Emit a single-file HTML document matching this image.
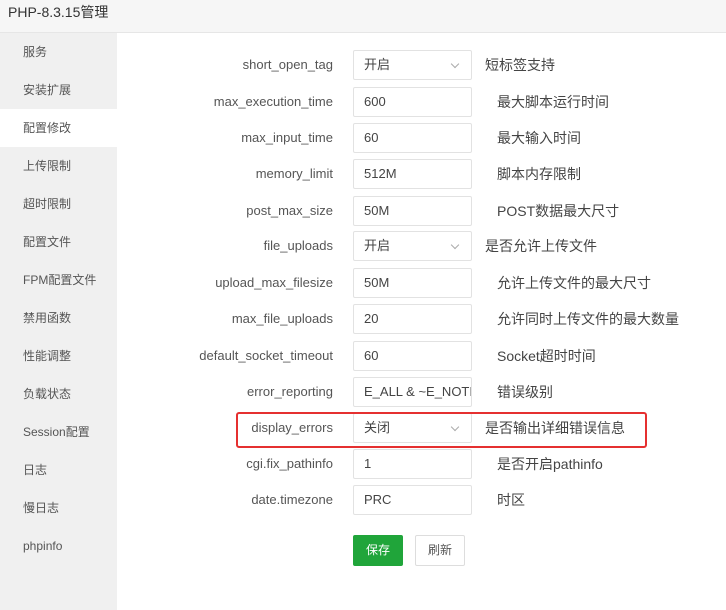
<!DOCTYPE html>
<html><head><meta charset="utf-8"><style>
*{box-sizing:border-box;margin:0;padding:0}
body{width:726px;height:610px;overflow:hidden;background:#fff;font-family:"Liberation Sans","Noto Sans CJK SC",sans-serif;color:#333;position:relative}
.hd{position:absolute;left:0;top:0;width:726px;height:33px;background:#f6f6f6;border-bottom:1px solid #e6e6e6;font-size:14px;line-height:24px;padding-left:8px;color:#333}
.sb{position:absolute;left:0;top:33px;width:117px;height:577px;background:#f0f0f0}
.sb div{height:38px;line-height:38px;padding-left:23px;font-size:12px;color:#555}
.sb .on{background:#fff}
.row{position:absolute;left:0;height:30px;width:726px;font-size:13px}
.lb{position:absolute;right:393px;top:0;line-height:30px;color:#555;white-space:nowrap}
.in{position:absolute;left:353px;top:0;width:119px;height:30px;border:1px solid #e2e2e2;border-radius:2px;line-height:28px;padding:0 8px 0 10px;font-size:13px;color:#444;overflow:hidden;white-space:nowrap}
.in.sel:after{content:"";position:absolute;right:13px;top:10px;width:5px;height:5px;border-right:1px solid #aaa;border-bottom:1px solid #aaa;transform:rotate(45deg)}
.ds{position:absolute;top:0;line-height:30px;color:#444;white-space:nowrap;font-size:14px}
.red{position:absolute;left:236px;top:412px;width:411px;height:36px;border:2px solid #e53030;border-radius:3px}
.btn{position:absolute;top:535px;height:31px;line-height:29px;font-size:12px;text-align:center;border-radius:2px}
</style></head><body>
<div class="hd">PHP-8.3.15管理</div>
<div class="sb">
<div>服务</div><div>安装扩展</div><div class="on">配置修改</div><div>上传限制</div><div>超时限制</div><div>配置文件</div><div>FPM配置文件</div><div>禁用函数</div><div>性能调整</div><div>负载状态</div><div>Session配置</div><div>日志</div><div>慢日志</div><div>phpinfo</div>
</div>

<div class="row" style="top:50px"><span class="lb">short_open_tag</span><div class="in sel">开启</div><span class="ds" style="left:485px">短标签支持</span></div>
<div class="row" style="top:87px"><span class="lb">max_execution_time</span><div class="in">600</div><span class="ds" style="left:497px">最大脚本运行时间</span></div>
<div class="row" style="top:123px"><span class="lb">max_input_time</span><div class="in">60</div><span class="ds" style="left:497px">最大输入时间</span></div>
<div class="row" style="top:159px"><span class="lb">memory_limit</span><div class="in">512M</div><span class="ds" style="left:497px">脚本内存限制</span></div>
<div class="row" style="top:196px"><span class="lb">post_max_size</span><div class="in">50M</div><span class="ds" style="left:497px">POST数据最大尺寸</span></div>
<div class="row" style="top:231px"><span class="lb">file_uploads</span><div class="in sel">开启</div><span class="ds" style="left:485px">是否允许上传文件</span></div>
<div class="row" style="top:268px"><span class="lb">upload_max_filesize</span><div class="in">50M</div><span class="ds" style="left:497px">允许上传文件的最大尺寸</span></div>
<div class="row" style="top:304px"><span class="lb">max_file_uploads</span><div class="in">20</div><span class="ds" style="left:497px">允许同时上传文件的最大数量</span></div>
<div class="row" style="top:341px"><span class="lb">default_socket_timeout</span><div class="in">60</div><span class="ds" style="left:497px">Socket超时时间</span></div>
<div class="row" style="top:377px"><span class="lb">error_reporting</span><div class="in">E_ALL &amp; ~E_NOTICE</div><span class="ds" style="left:497px">错误级别</span></div>
<div class="row" style="top:413px"><span class="lb">display_errors</span><div class="in sel">关闭</div><span class="ds" style="left:485px">是否输出详细错误信息</span></div>
<div class="row" style="top:449px"><span class="lb">cgi.fix_pathinfo</span><div class="in">1</div><span class="ds" style="left:497px">是否开启pathinfo</span></div>
<div class="row" style="top:485px"><span class="lb">date.timezone</span><div class="in">PRC</div><span class="ds" style="left:497px">时区</span></div>
<div class="red"></div>
<div class="btn" style="left:353px;width:50px;background:#20a53a;color:#fff;border:1px solid #20a53a">保存</div>
<div class="btn" style="left:415px;width:50px;background:#fff;color:#555;border:1px solid #ddd">刷新</div>
</body></html>
